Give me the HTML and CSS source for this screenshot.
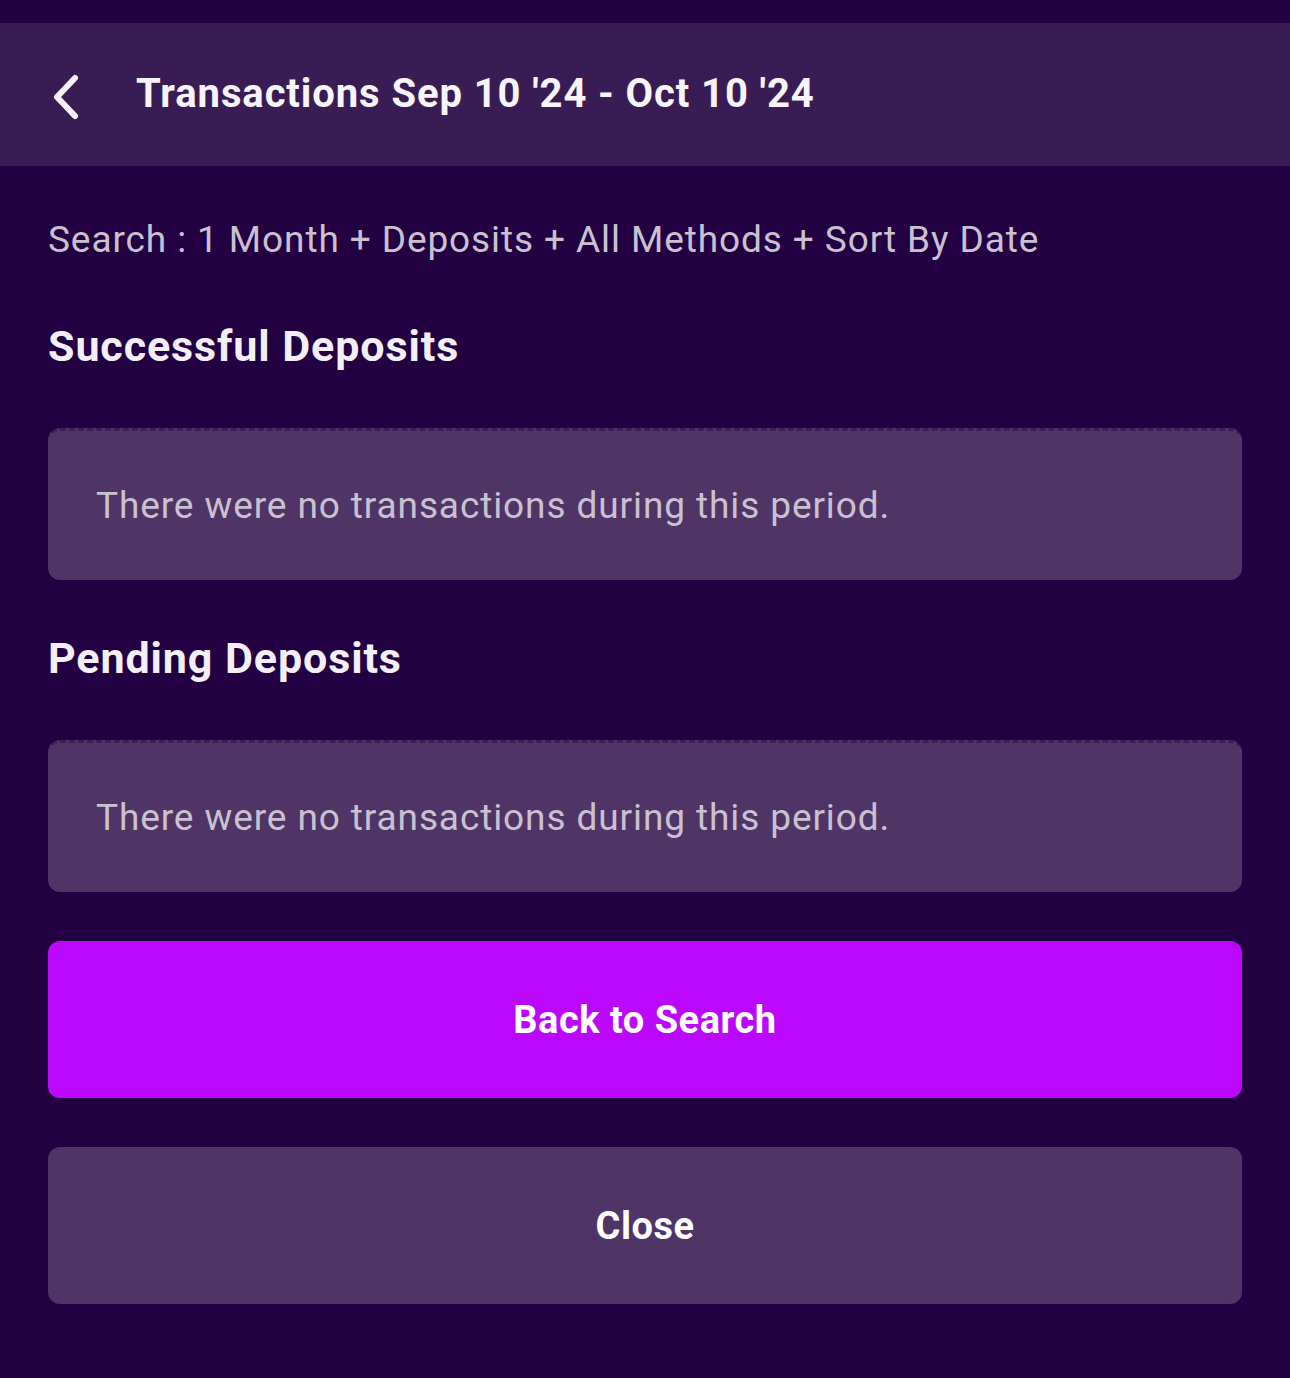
FILE: index.html
```html
<!DOCTYPE html>
<html>
<head>
<meta charset="utf-8">
<link rel="stylesheet" href="styles.css">
</head>
<body>
<div class="page">
  <header class="topbar">
    <svg class="back" width="36" height="48" viewBox="0 0 36 48"><path d="M27 5 L9 24 L27 43" fill="none" stroke="#f5f3f7" stroke-width="6" stroke-linecap="round" stroke-linejoin="round"/></svg>
    <h1 class="title">Transactions Sep 10 '24 - Oct 10 '24</h1>
  </header>
  <main class="content">
    <p class="search">Search : 1 Month + Deposits + All Methods + Sort By Date</p>
    <h2 class="section-title">Successful Deposits</h2>
    <div class="empty">There were no transactions during this period.</div>
    <h2 class="section-title">Pending Deposits</h2>
    <div class="empty">There were no transactions during this period.</div>
    <button class="btn btn-primary">Back to Search</button>
    <button class="btn btn-secondary">Close</button>
  </main>
</div>
</body>
</html>
```
FILE: styles.css
```css
html, body {
  margin: 0;
  padding: 0;
  background: #230041;
}
body {
  font-family: Roboto, "Noto Sans", sans-serif;
  color: #f3eff6;
}
.page {
  padding-top: 23px;
}
.topbar {
  height: 143px;
  background: #3a1c55;
  display: flex;
  align-items: center;
  padding-left: 48px;
  box-sizing: border-box;
}
.back {
  display: block;
  margin-right: 52px;
  margin-top: 4px;
}
.title {
  margin: 0 0 2px 0;
  font-size: 40px;
  font-weight: 700;
  letter-spacing: 0.9px;
  color: #f6f4f8;
  line-height: 1;
}
.content {
  padding: 0 48px;
  display: flex;
  flex-direction: column;
}
.search {
  margin: 52px 0 0 0;
  font-size: 37px;
  line-height: 44px;
  letter-spacing: 0.9px;
  color: #c9c1d0;
}
.section-title {
  margin: 60px 0 0 0;
  font-size: 43px;
  font-weight: 700;
  line-height: 48px;
  letter-spacing: 0.9px;
  color: #f3eff6;
}
.empty {
  margin-top: 58px;
  height: 152px;
  box-sizing: border-box;
  background: #4f3465;
  border-top: 3px dashed #3b1f55;
  border-radius: 12px;
  display: flex;
  align-items: center;
  padding-left: 48px;
  font-size: 37px;
  letter-spacing: 0.9px;
  color: #c9c1d0;
}
.empty + .section-title {
  margin-top: 54px;
}
.btn {
  height: 157px;
  border: none;
  border-radius: 12px;
  font-family: Roboto, "Noto Sans", sans-serif;
  font-size: 38px;
  font-weight: 700;
  letter-spacing: 0.5px;
  color: #ffffff;
  padding: 0;
}
.btn-primary {
  margin-top: 49px;
  background: #bb08fd;
}
.btn-secondary {
  margin-top: 49px;
  background: #4f3465;
}
```
